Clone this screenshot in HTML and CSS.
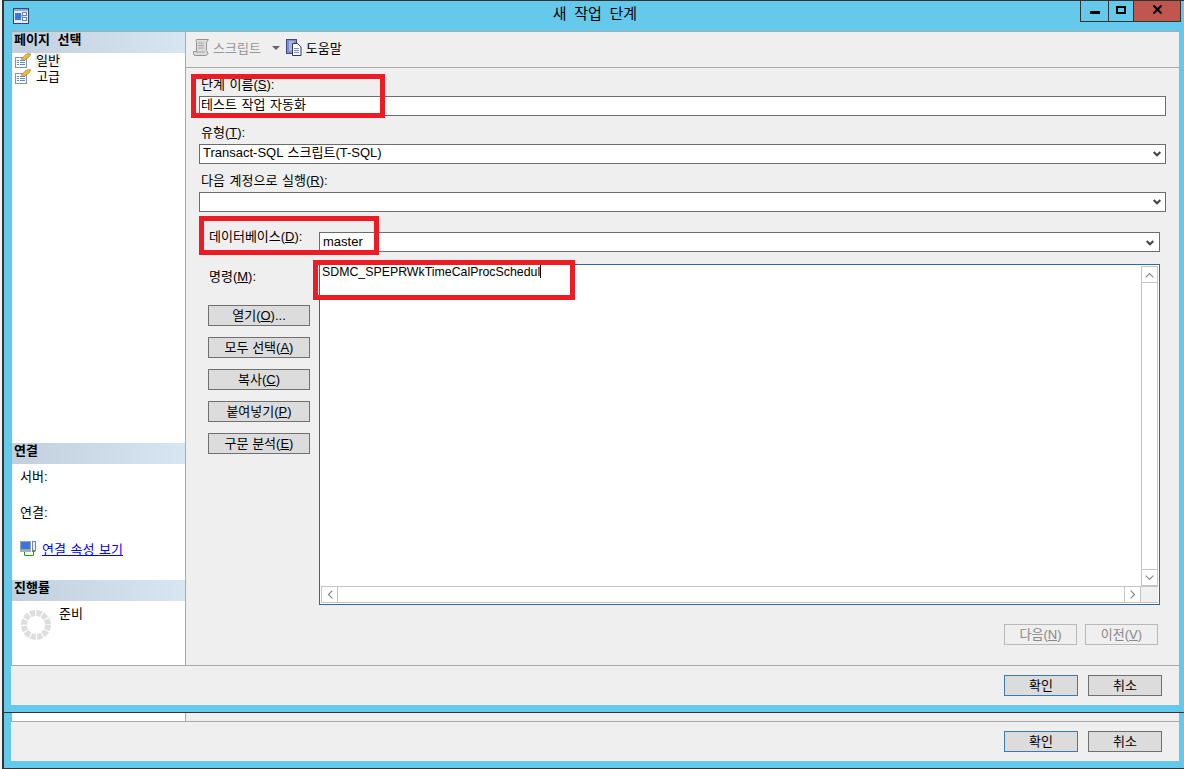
FILE: index.html
```html
<!DOCTYPE html>
<html lang="ko">
<head>
<meta charset="utf-8">
<title>새 작업 단계</title>
<link rel="stylesheet" href="styles.css">
</head>
<body>
<div class="win main-win">
  <div class="titlebar">
    <svg class="app-icon" width="16" height="16" viewBox="0 0 16 16"><rect x="0.5" y="0.5" width="15" height="15" fill="#e6edf8" stroke="#33486f"/><rect x="1" y="1" width="14" height="2" fill="#8aa8d8"/><rect x="2" y="5" width="6" height="7" fill="#3f74d0"/><rect x="9.5" y="4.5" width="4" height="3" fill="#fff" stroke="#5f7fb5"/><rect x="9.5" y="9.5" width="4" height="3" fill="#fff" stroke="#5f7fb5"/><path d="M8 8h2" stroke="#5f7fb5"/></svg>
    <div class="title">새 작업 단계</div>
    <div class="controls">
      <div class="ctl ctl-min"><span class="min-glyph"></span></div>
      <div class="ctl ctl-max"><span class="max-glyph"></span></div>
      <div class="ctl ctl-close"><svg width="9" height="9" viewBox="0 0 9 9"><path d="M0.5 0.5 L8.5 8.5 M8.5 0.5 L0.5 8.5" stroke="#000" stroke-width="2"/></svg></div>
    </div>
  </div>
  <div class="client">
    <div class="content-row">
      <aside class="sidebar">
        <div class="side-head">페이지 선택</div>
        <div class="pages">
          <div class="page-item"><svg class="page-icon" width="16" height="15" viewBox="0 0 16 15"><rect x="0.5" y="4.5" width="11" height="10" fill="#fff" stroke="#8592a3"/><path d="M2 7.5h2M5 7.5h5M2 9.5h2M5 9.5h5M2 11.5h2M5 11.5h5" stroke="#5f8ac4"/><path d="M6 6 L11 1.5 L13 0.5 L16 1 L14 4 L9 7.5 Z" fill="#e9bd3f" stroke="#8a7a2c" stroke-width="0.6"/></svg><span class="sel">일반</span></div>
          <div class="page-item"><svg class="page-icon" width="16" height="15" viewBox="0 0 16 15"><rect x="0.5" y="4.5" width="11" height="10" fill="#fff" stroke="#8592a3"/><path d="M2 7.5h2M5 7.5h5M2 9.5h2M5 9.5h5M2 11.5h2M5 11.5h5" stroke="#5f8ac4"/><path d="M6 6 L11 1.5 L13 0.5 L16 1 L14 4 L9 7.5 Z" fill="#e9bd3f" stroke="#8a7a2c" stroke-width="0.6"/></svg><span>고급</span></div>
        </div>
        <div class="side-head">연결</div>
        <div class="conn">
          <div class="conn-label">서버:</div>
          <div class="conn-label">연결:</div>
          <div class="conn-link">
            <svg width="16" height="15" viewBox="0 0 16 15"><rect x="0.5" y="0.5" width="10" height="8" fill="#3a74dc" stroke="#98a2b0"/><rect x="0" y="9" width="11" height="2" fill="#a5adb8"/><rect x="12.5" y="0.5" width="3" height="9" fill="#e8ebf0" stroke="#7d8794"/><path d="M4.5 11v3.5h9V10" fill="none" stroke="#2f9a12"/><path d="M11.5 11l2-2 2 2z" fill="#2f9a12"/></svg>
            <a href="#">연결 속성 보기</a>
          </div>
        </div>
        <div class="side-head">진행률</div>
        <div class="progress">
          <svg class="spinner" width="30" height="30" viewBox="0 0 30 30"><circle cx="15" cy="15" r="12" fill="none" stroke="#dedede" stroke-width="6" stroke-dasharray="5.1 1.18"/></svg>
          <span>준비</span>
        </div>
      </aside>
      <main class="pane">
        <div class="toolbar">
          <svg class="script-icon" width="16" height="17" viewBox="0 0 16 17"><path d="M3.5 0.5H15.5L13.5 3.5V11.5L15 14.5Q14 16.5 12 16.5H2.5Q0.5 16.5 0.5 14.5V12.5H3.5V3.5Q2.5 1 3.5 0.5Z" fill="#dcdcdc" stroke="#929292"/><path d="M5 4h6M5 6.5h6M5 9h6M3 13h9" stroke="#a2a2a2"/></svg>
          <span class="tb-dis">스크립트</span>
          <span class="tb-arrow"></span>
          <svg class="help-icon" width="16" height="17" viewBox="0 0 16 17"><rect x="0.5" y="0.5" width="10" height="14" fill="#8090cc" stroke="#3d4b85"/><path d="M3 2h5v10H3z" fill="#aab5e2"/><path d="M6.5 4.5h5l3.5 3.5v8.5H6.5z" fill="#fff" stroke="#2e3a55"/><path d="M8 9.5h5M8 11.5h5M8 13.5h5" stroke="#7f8fc8"/></svg>
          <span>도움말</span>
        </div>
        <div class="form">
          <div class="field">
            <label>단계 이름(<u>S</u>):</label>
            <div class="input">테스트 작업 자동화</div>
          </div>
          <div class="field">
            <label>유형(<u>T</u>):</label>
            <div class="input combo"><span>Transact-SQL 스크립트(T-SQL)</span><svg class="chev" width="8" height="6" viewBox="0 0 8 6"><path d="M0.7 1 L4 4.3 L7.3 1" fill="none" stroke="#444" stroke-width="2"/></svg></div>
          </div>
          <div class="field">
            <label>다음 계정으로 실행(<u>R</u>):</label>
            <div class="input combo"><span></span><svg class="chev" width="8" height="6" viewBox="0 0 8 6"><path d="M0.7 1 L4 4.3 L7.3 1" fill="none" stroke="#444" stroke-width="2"/></svg></div>
          </div>
          <div class="detail">
            <div class="db-row">
              <label>데이터베이스(<u>D</u>):</label>
              <div class="input combo db"><span>master</span><svg class="chev" width="8" height="6" viewBox="0 0 8 6"><path d="M0.7 1 L4 4.3 L7.3 1" fill="none" stroke="#444" stroke-width="2"/></svg></div>
            </div>
            <div class="cmd-row">
              <div class="cmd-side">
                <label>명령(<u>M</u>):</label>
                <button class="btn">열기(<u>O</u>)...</button>
                <button class="btn">모두 선택(<u>A</u>)</button>
                <button class="btn">복사(<u>C</u>)</button>
                <button class="btn">붙여넣기(<u>P</u>)</button>
                <button class="btn">구문 분석(<u>E</u>)</button>
              </div>
              <div class="editor">
                <div class="editor-top">
                  <div class="editor-text">SDMC_SPEPRWkTimeCalProcSchedul<span class="caret"></span></div>
                  <div class="vscroll">
                    <div class="sbtn"><svg width="9" height="6" viewBox="0 0 9 6"><path d="M0.7 5.3 L4.5 1.5 L8.3 5.3" fill="none" stroke="#888" stroke-width="1.2"/></svg></div>
                    <div class="strack"></div>
                    <div class="sbtn"><svg width="9" height="6" viewBox="0 0 9 6"><path d="M0.7 0.7 L4.5 4.5 L8.3 0.7" fill="none" stroke="#888" stroke-width="1.2"/></svg></div>
                  </div>
                </div>
                <div class="hscroll">
                  <div class="hbtn"><svg width="6" height="9" viewBox="0 0 6 9"><path d="M5.3 0.7 L1.5 4.5 L5.3 8.3" fill="none" stroke="#888" stroke-width="1.2"/></svg></div>
                  <div class="htrack"></div>
                  <div class="hbtn"><svg width="6" height="9" viewBox="0 0 6 9"><path d="M0.7 0.7 L4.5 4.5 L0.7 8.3" fill="none" stroke="#888" stroke-width="1.2"/></svg></div>
                  <div class="corner"></div>
                </div>
              </div>
            </div>
          </div>
          <div class="nav-row">
            <button class="btn nav" disabled>다음(<u>N</u>)</button>
            <button class="btn nav" disabled>이전(<u>V</u>)</button>
          </div>
        </div>
      </main>
    </div>
    <div class="footer">
      <button class="btn foot primary">확인</button>
      <button class="btn foot">취소</button>
    </div>
  </div>
  <div class="mark mark-name"></div>
  <div class="mark mark-db"></div>
  <div class="mark mark-cmd"></div>
</div>
<div class="win lower-win">
  <div class="strip"><div class="strip-side"></div></div>
  <div class="footer lower-foot">
    <button class="btn foot primary">확인</button>
    <button class="btn foot">취소</button>
  </div>
</div>
</body>
</html>
```
FILE: styles.css
```css
* { box-sizing: border-box; }
html, body { margin: 0; padding: 0; }
body {
  width: 1184px;
  height: 769px;
  overflow: hidden;
  background: #f4f4f4;
  font-family: "Liberation Sans", "Noto Sans CJK KR", sans-serif;
  font-size: 13px;
  word-spacing: 1px;
  color: #000;
}
.win {
  position: relative;
  margin-left: 2px;
  border-left: 2px solid #333;
  background: #65c9ec;
}
.main-win {
  height: 712px;
  border-top: 1px solid #333;
  padding: 0 5px 7px 7px;
  display: flex;
  flex-direction: column;
}
.titlebar {
  height: 30px;
  margin-right: -5px;
  position: relative;
  display: flex;
  align-items: flex-start;
}
.app-icon { margin: 7px 0 0 2px; }
.title {
  position: absolute;
  left: 0;
  right: 0;
  top: 3px;
  text-align: center;
  font-size: 15px;
  word-spacing: 3.5px;
  line-height: 20px;
  padding-right: 5px;
}
.controls {
  position: absolute;
  right: 3px;
  top: 0;
  display: flex;
  height: 21px;
  border: 1px solid #333;
  border-top: 0;
}
.ctl { display: flex; align-items: center; justify-content: center; height: 100%; }
.ctl-min { width: 28px; border-right: 1px solid #333; }
.ctl-max { width: 25px; border-right: 1px solid #333; }
.ctl-close { width: 46px; background: #c0574e; }
.min-glyph { width: 10px; height: 3px; background: #000; margin-top: 3px; }
.max-glyph { width: 10px; height: 8px; border: 2px solid #000; margin-top: -3px; }
.ctl-close svg { margin-top: -3px; }
.client {
  flex: 1;
  display: flex;
  flex-direction: column;
  border-top: 1px solid #a9a9a9;
  min-height: 0;
}
.content-row { flex: 1; display: flex; min-height: 0; }
.sidebar {
  width: 175px;
  background: #fff;
  border-right: 1px solid #a9a9a9;
  border-left: 1px solid #a9a9a9;
  display: flex;
  flex-direction: column;
}
.side-head {
  height: 21px;
  padding-left: 2px;
  font-weight: 700;
  font-size: 13px;
  word-spacing: 4px;
  line-height: 16px;
  background: linear-gradient(90deg, #c2d0dd, #d8e5f2);
}
.pages { height: 390px; }
.page-item { display: flex; align-items: center; height: 16px; padding-left: 3px; font-size: 13px; line-height: 15px; position: relative; top: -1px; }
.page-icon { margin-right: 5px; flex: none; }
.sel { background: #f0f0f0; padding: 0 1px; margin-left: -1px; }
.conn { height: 116px; padding: 0 0 0 8px; }
.conn-label { height: 36px; padding: 4px 0 0 0; line-height: 18px; }
.conn-link { display: flex; align-items: center; gap: 6px; margin-top: 3px; height: 18px; }
.conn-link svg { flex: none; }
.conn-link a { color: #0000ee; text-decoration: underline; }
.progress { flex: 1; display: flex; align-items: flex-start; padding: 9px 0 0 9px; }
.progress span { margin: -6px 0 0 8px; line-height: 20px; }
.spinner { flex: none; }
.pane { flex: 1; min-width: 0; background: #efefef; display: flex; flex-direction: column; }
.toolbar {
  height: 36px;
  padding: 0 0 5px 7px;
  border-bottom: 1px solid #a9a9a9;
  display: flex;
  align-items: center;
}
.script-icon { flex: none; }
.tb-dis { color: #999; margin-left: 4px; }
.tb-arrow { width: 0; height: 0; margin: 2px 0 0 11px; border: 4px solid transparent; border-top: 4px solid #666; border-bottom: 0; }
.help-icon { margin-left: 6px; margin-right: 4px; flex: none; }
.form { flex: 1; padding: 10px 13px 0 13px; display: flex; flex-direction: column; }
.field { height: 48px; display: flex; flex-direction: column; }
label { line-height: 14px; padding-bottom: 4px; display: block; margin-left: 2px; }
.input {
  height: 20px;
  background: #fff;
  border: 1px solid #6d6d6d;
  line-height: 16px;
  padding-left: 1px;
  white-space: nowrap;
}
.combo { display: flex; align-items: center; justify-content: space-between; padding: 0 4px 2px 3px; }
.chev { margin-top: 2px; }
.detail { padding: 0 6px 0 10px; }
.db-row { display: flex; height: 42px; align-items: flex-start; }
.db-row label { width: 110px; margin: 6px 0 0 0; flex: none; line-height: 18px; padding: 0; }
.db { flex: 1; margin-top: 10px; padding-right: 5px; padding-bottom: 0; }
.cmd-row { display: flex; height: 341px; }
.cmd-side { width: 110px; flex: none; display: flex; flex-direction: column; align-items: flex-start; }
.cmd-side label { margin: 4px 0 19px 0; line-height: 18px; padding: 0; }
.btn {
  font: inherit;
  background: #dcdcdc;
  border: 1px solid #707070;
  color: #000;
  width: 102px;
  height: 21px;
  padding: 0;
  margin: 0 0 11px -1px;
  line-height: 17px;
}
.editor { flex: 1; min-width: 0; background: #fff; border: 1px solid #2d6a9c; padding: 1px; display: flex; flex-direction: column; height: 341px; }
.editor-top { flex: 1; display: flex; min-height: 0; }
.editor-text { flex: 1; padding: 0 0 0 1px; margin-top: -1px; font-size: 12.35px; line-height: 14px; white-space: nowrap; }
.caret { display: inline-block; width: 1px; height: 13px; background: #000; vertical-align: -2px; }
.vscroll { width: 17px; flex: none; display: flex; flex-direction: column; border: 1px solid #c4c4c4; border-width: 0 1px; }
.sbtn { height: 17px; border: 1px solid #c4c4c4; border-width: 1px 0; display: flex; align-items: center; justify-content: center; background: #fff; }
.strack { flex: 1; background: #fff; }
.hscroll { height: 17px; flex: none; display: flex; border: 1px solid #c4c4c4; border-width: 1px 0; }
.hbtn { width: 17px; flex: none; border: 1px solid #c4c4c4; border-width: 0 1px; display: flex; align-items: center; justify-content: center; }
.htrack { flex: 1; }
.corner { width: 17px; flex: none; background: #f0f0f0; }
.nav-row { display: flex; justify-content: flex-end; gap: 8px; padding-right: 8px; margin-top: 19px; }
.nav { width: 73px; background: #efefef; border-color: #b8b8b8; color: #888; margin: 0; }
.footer {
  height: 40px;
  flex: none;
  background: #efefef;
  border-top: 1px solid #a9a9a9;
  display: flex;
  justify-content: flex-end;
  align-items: flex-start;
  gap: 10px;
  padding: 9px 17px 0 0;
}
.foot { width: 74px; margin: 0; }
.primary { border-color: #3d7ab0; }
.mark { position: absolute; border: 5px solid #ed1c24; pointer-events: none; }
.mark-name { left: 187px; top: 73px; width: 194px; height: 44px; }
.mark-db { left: 195px; top: 215px; width: 180px; height: 39px; }
.mark-cmd { left: 309px; top: 259px; width: 262px; height: 40px; }
.lower-win {
  height: 57px;
  border-top: 1px solid #333;
  border-bottom: 1px solid #333;
  padding: 0 5px 0 7px;
  display: flex;
  flex-direction: column;
}
.strip { height: 8px; background: #efefef; flex: none; }
.strip-side { width: 175px; height: 100%; background: #fff; border: solid #a9a9a9; border-width: 0 1px; }
```
